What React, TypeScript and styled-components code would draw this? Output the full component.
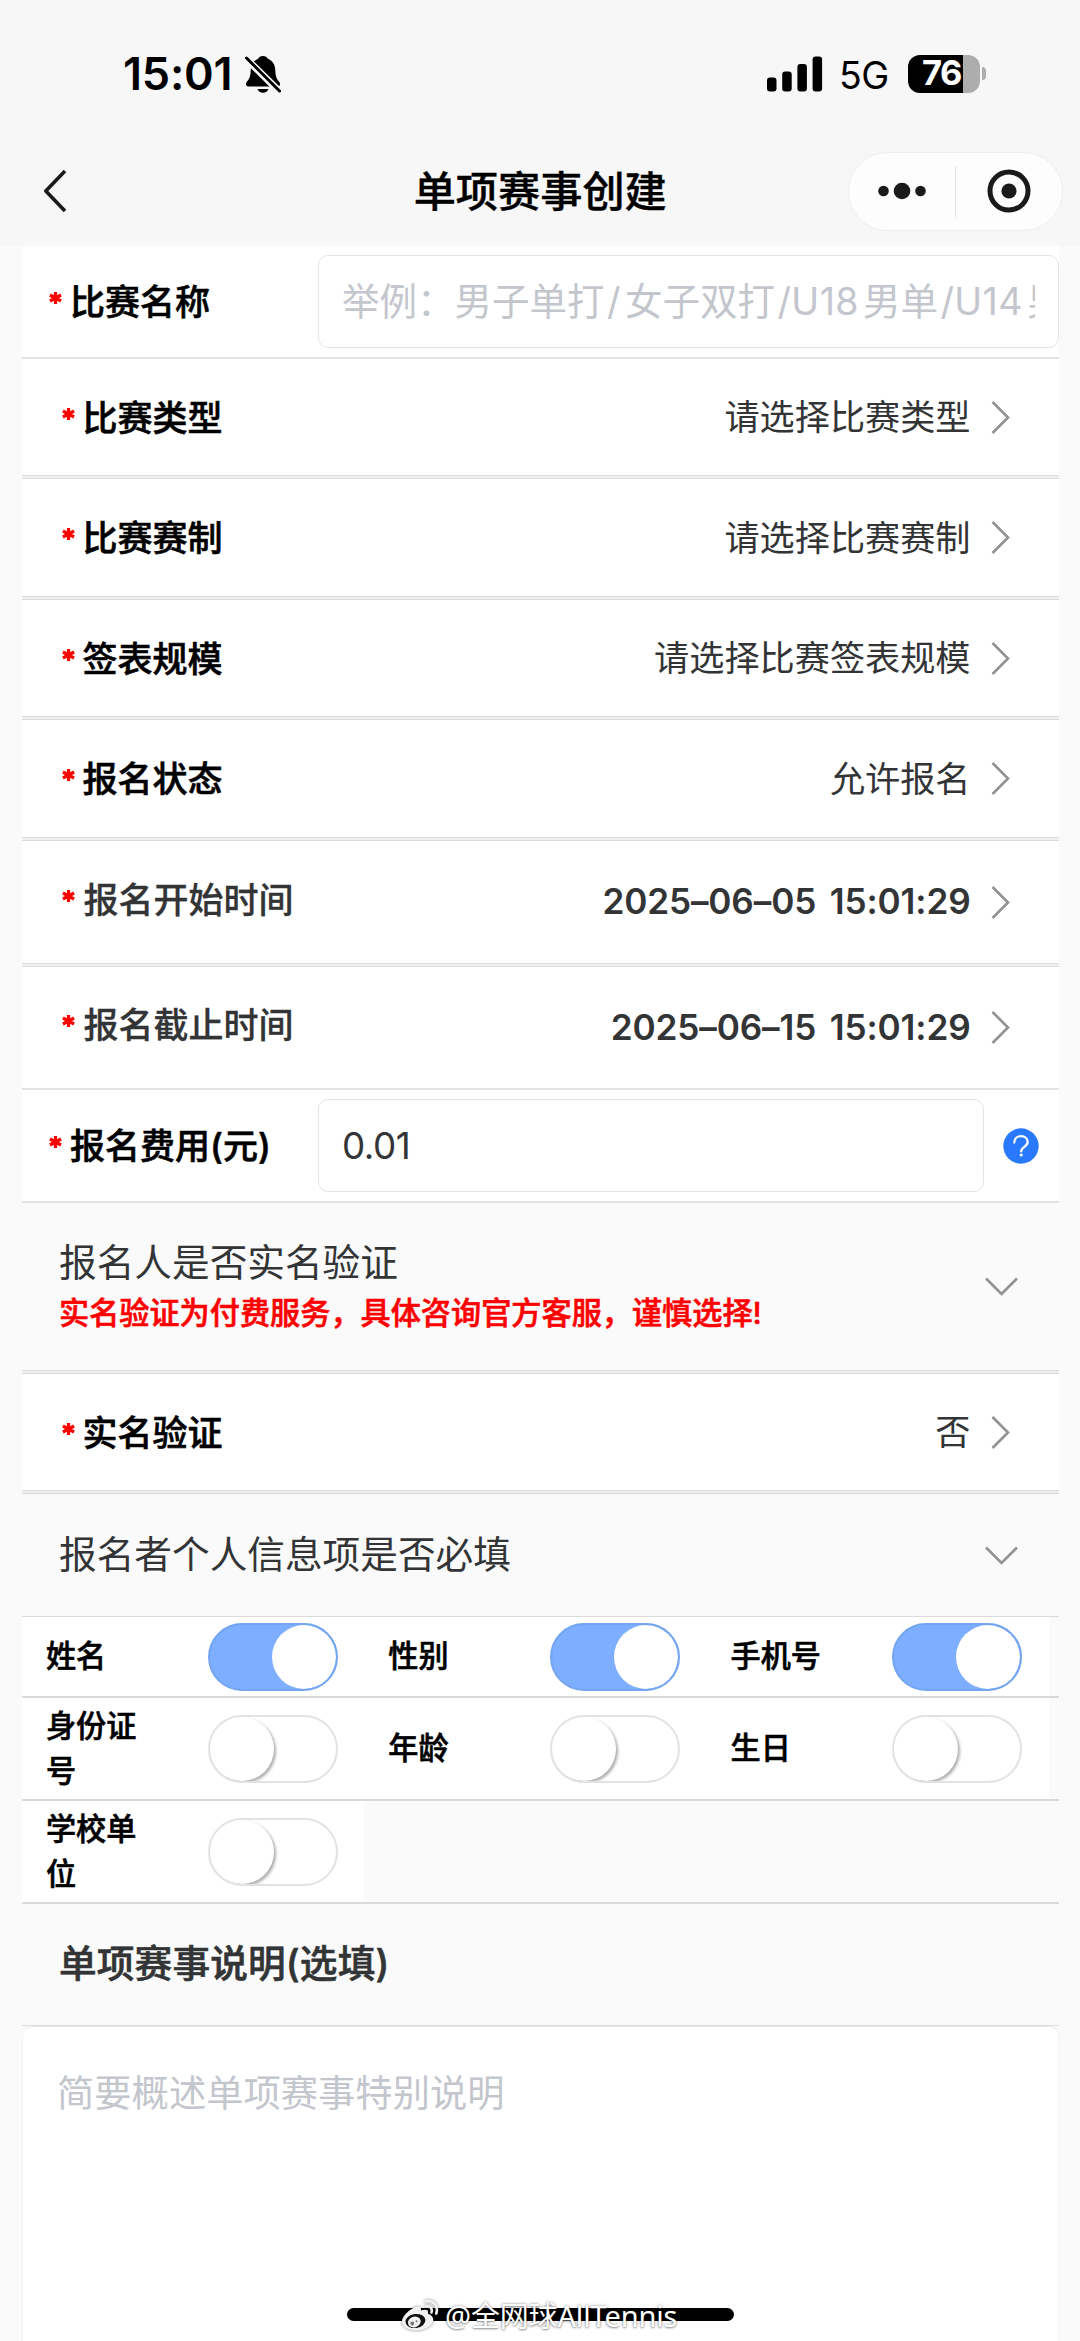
import React from 'react';
import styled, { createGlobalStyle } from 'styled-components';

const Global = createGlobalStyle`
  *, *::before, *::after { box-sizing: border-box; }
  body { margin: 0; background: #fafafa; }
`;

const Screen = styled.div`
  position: relative;
  width: 1080px;
  height: 2341px;
  overflow: hidden;
  display: flex;
  flex-direction: column;
  background: #fafafa;
  color: #333436;
  font-family: Inter, 'Noto Sans CJK SC', sans-serif;
  font-size: 35.16px;
  line-height: 1;
`;

const Header = styled.header`
  height: 246px;
  flex: none;
  background: #f7f7f7;
  color: #000;
  display: flex;
  flex-direction: column;
`;

const StatusBar = styled.div`
  height: 136px;
  padding: 11px 94px 0 123px;
  display: flex;
  align-items: center;
  justify-content: space-between;
`;

const Cluster = styled.div<{ $gap: number }>`
  display: flex;
  align-items: center;
  gap: ${(p) => p.$gap}px;
`;

const Clock = styled.span`
  font-size: 45px;
  font-weight: 600;
  letter-spacing: -0.2px;
  width: 112px;
  white-space: nowrap;
`;

const Network = styled.span`
  font-size: 37.5px;
  font-weight: 400;
  letter-spacing: -0.5px;
  margin: 4px 2px 0 -2px;
  width: 49px;
`;

const Battery = styled.div`
  display: flex;
  align-items: center;
  gap: 2px;
`;

const BatteryBody = styled.div`
  width: 72px;
  height: 38px;
  border-radius: 12px;
  padding-left: 14px;
  display: flex;
  align-items: center;
  background: linear-gradient(90deg, #000 55px, #adadad 55px);
  color: #fff;
  font-size: 34.5px;
  font-weight: 700;
  letter-spacing: -1.5px;
`;

const BatteryNub = styled.div`
  width: 4px;
  height: 13px;
  border-radius: 0 5px 5px 0;
  background: #adadad;
`;

const NavBar = styled.div`
  height: 110px;
  display: grid;
  grid-template-columns: 1fr auto 1fr;
  align-items: center;
  padding: 0 17.5px 0 43px;
`;

const Title = styled.h1`
  margin: 2px 0 0 -25px;
  font-size: 42.2px;
  font-weight: 500;
  -webkit-text-stroke: 0.4px currentColor;
`;

const Capsule = styled.div`
  justify-self: end;
  width: 215px;
  height: 79px;
  border: 1px solid #efefef;
  border-radius: 40px;
  background: #fdfdfd;
  display: flex;
  align-items: center;
`;

const CapsuleHalf = styled.div`
  flex: 1;
  display: flex;
  justify-content: center;
`;

const CapsuleRule = styled.div`
  width: 1px;
  height: 51px;
  background: #e3e3e3;
`;

const Form = styled.main`
  width: 1037px;
  margin-left: 22px;
  flex: 1;
  display: flex;
  flex-direction: column;
`;

const Rule = styled.div<{ $kind: 'thin' | 'single' | 'double' | 'solid' }>`
  flex: none;
  height: ${(p) => ({ thin: 1, single: 2, double: 4, solid: 2 })[p.$kind]}px;
  background: ${(p) =>
    ({
      thin: '#dcdcdc',
      single: '#e2e2e2',
      double: 'linear-gradient(#dedede 1px, #efefef 1px, #efefef 3px, #dcdcdc 3px)',
      solid: '#d9d9d9',
    })[p.$kind]};
`;

const Row = styled.div<{ $h: number; $inset?: boolean }>`
  flex: none;
  height: ${(p) => p.$h}px;
  padding: ${(p) => (p.$inset ? '0 0 0 27px' : '0 49px 0 39.5px')};
  background: #fff;
  display: flex;
  align-items: center;
`;

const Label = styled.div<{ $soft?: boolean; $width?: number }>`
  display: flex;
  align-items: center;
  padding-top: 2px;
  font-weight: 500;
  font-size: 35px;
  -webkit-text-stroke: ${(p) => (p.$soft ? 0.3 : 0.6)}px currentColor;
  color: ${(p) => (p.$soft ? '#333436' : '#000')};
  ${(p) => p.$width && `width: ${p.$width}px; flex: none;`}
  ${(p) => p.$soft && 'padding-bottom: 6px;'}
  white-space: nowrap;
`;

const Star = styled.span<{ $wide?: boolean }>`
  width: ${(p) => (p.$wide ? 22 : 21)}px;
  display: flex;
  align-items: center;
  margin-top: -9px;
`;

const Value = styled.span<{ $strong?: boolean }>`
  margin-left: auto;
  margin-right: 20.5px;
  padding-top: ${(p) => (p.$strong ? 0 : 2)}px;
  font-weight: ${(p) => (p.$strong ? 600 : 400)};
  ${(p) => p.$strong && 'letter-spacing: -0.15px;'}
  word-spacing: 5px;
  white-space: nowrap;
`;

const Field = styled.div<{ $width: number; $muted?: boolean }>`
  width: ${(p) => p.$width}px;
  height: 93px;
  border: 1.5px solid #e4e5e8;
  border-radius: 10px;
  padding: 1px 23px 0 23px;
  display: flex;
  align-items: center;
  font-size: ${(p) => (p.$muted ? 37.5 : 36.8)}px;
  letter-spacing: ${(p) => (p.$muted ? 0 : -0.5)}px;
  color: ${(p) => (p.$muted ? '#c3c6cc' : '#333436')};
`;

const Clip = styled.span`
  flex: 1;
  overflow: hidden;
  white-space: nowrap;
  line-height: 1.4;
`;

const Latin = styled.span`
  margin: 0 4px 0 2.5px;
  letter-spacing: 0.4px;
`;

const Help = styled.span`
  margin-left: 18.5px;
  display: flex;
`;

const Section = styled.div<{ $h: number }>`
  flex: none;
  height: ${(p) => p.$h}px;
  padding: 0 41px 0 37px;
  display: flex;
  align-items: center;
  justify-content: space-between;
  font-size: 37.67px;
`;

const SectionText = styled.div<{ $bold?: boolean }>`
  font-weight: ${(p) => (p.$bold ? 500 : 400)};
  ${(p) => p.$bold && '-webkit-text-stroke: 0.6px currentColor; letter-spacing: 0.15px; margin-top: -2px;'}
  line-height: 50px;
`;

const SectionBody = styled.div`
  padding-top: 2px;
`;

const Warning = styled.div`
  font-size: 30.16px;
  font-weight: 500;
  -webkit-text-stroke: 0.6px currentColor;
  line-height: 50px;
  color: #f00;
`;

const Grid = styled.div<{ $h: number }>`
  flex: none;
  height: ${(p) => p.$h}px;
  display: grid;
  grid-template-columns: repeat(3, 342.3px);
`;

const Cell = styled.div`
  background: #fff;
  padding: 0 26.5px 0 24px;
  display: flex;
  align-items: center;
  justify-content: space-between;
`;

const CellLabel = styled.div`
  width: 96px;
  color: #000;
  font-size: 30.14px;
  font-weight: 500;
  -webkit-text-stroke: 0.6px currentColor;
  line-height: 45px;
`;

const Track = styled.div<{ $on: boolean }>`
  flex: none;
  width: 130px;
  height: 68px;
  border: 2px solid ${(p) => (p.$on ? '#74a5f0' : '#e2e2e2')};
  border-radius: 34px;
  background: ${(p) => (p.$on ? '#7eaeff' : '#fff')};
  display: flex;
  justify-content: ${(p) => (p.$on ? 'flex-end' : 'flex-start')};
  overflow: hidden;
`;

const Knob = styled.div<{ $on: boolean }>`
  width: 64px;
  height: 64px;
  border-radius: 50%;
  background: #fff;
  ${(p) => !p.$on && 'box-shadow: 2px 2px 3px rgba(0, 0, 0, 0.32);'}
`;

const TextArea = styled.div`
  flex: 1;
  border: 1.5px solid #f3f3f4;
  border-top-color: #e6e6e6;
  border-bottom: 0;
  border-radius: 10px 10px 0 0;
  background: #fff;
  padding: 42px 34px;
  font-size: 37.3px;
  line-height: 50px;
  color: #c3c6cc;
`;

const HomeIndicator = styled.div`
  position: absolute;
  left: 347px;
  top: 2308px;
  width: 387px;
  height: 13px;
  border-radius: 7px;
  background: #000;
`;

const Watermark = styled.div`
  position: absolute;
  left: 401px;
  top: 2296px;
  height: 38px;
  display: flex;
  align-items: center;
  gap: 6px;
  color: #fff;
  font-size: 29px;
  font-weight: 400;
  font-family: 'Noto Sans', 'Noto Sans CJK SC', sans-serif;
  letter-spacing: -0.15px;
  white-space: nowrap;
  text-shadow: 0 0 3px rgba(0, 0, 0, 0.45), 0 1px 2px rgba(0, 0, 0, 0.3);
  svg { filter: drop-shadow(0 0 1.5px rgba(0, 0, 0, 0.5)); }
`;

const BellOff = () => (
  <svg width="36" height="38" viewBox="0 0 36 38">
    <path d="M18 1c2.500 0 4.300 1.200 4.800 2.700 4.700 1.800 7.300 5.900 7.500 11.300.2 6.500 1.200 8.700 3.700 11.400 1.800 2 1.200 5-1.400 5H3.400c-2.600 0-3.200-3-1.400-5C4.500 23.700 5.500 21.500 5.700 15c.2-5.400 2.800-9.500 7.500-11.300C13.700 2.200 15.500 1 18 1zM12.500 34h11c-.7 2.300-2.800 3.800-5.500 3.800s-4.800-1.500-5.500-3.800z" />
    <path d="M1 3.500 35 37" stroke="#f7f7f7" strokeWidth="7" />
    <path d="M1.500 3 34.500 36" stroke="#000" strokeWidth="3" strokeLinecap="round" />
  </svg>
);

const Signal = () => (
  <svg width="56" height="36" viewBox="0 0 56 36">
    <rect x="0" y="21.500" width="9.500" height="14" rx="3" />
    <rect x="15.200" y="15.500" width="9.500" height="20" rx="3" />
    <rect x="30.400" y="8" width="9.500" height="27.500" rx="3" />
    <rect x="45.600" y="0.500" width="9.500" height="35" rx="3" />
  </svg>
);

const Back = () => (
  <svg width="25" height="44" viewBox="0 0 25 44" fill="none" stroke="#1a1a1a" strokeWidth="3.600">
    <path d="M22 2 2.800 22 22 42" strokeLinejoin="round" />
  </svg>
);

const Dots = () => (
  <svg width="48" height="18" viewBox="0 0 48 18" fill="#1a1a1a">
    <circle cx="5.500" cy="9" r="5.300" />
    <circle cx="24" cy="9" r="8.300" />
    <circle cx="42.500" cy="9" r="5.300" />
  </svg>
);

const Target = () => (
  <svg width="44" height="44" viewBox="0 0 44 44">
    <circle cx="22" cy="22" r="19" fill="none" stroke="#1a1a1a" strokeWidth="5" />
    <circle cx="22" cy="22" r="7.600" fill="#1a1a1a" />
  </svg>
);

const ChevronRight = () => (
  <svg width="19" height="33" viewBox="0 0 19 33" fill="none" stroke="#909294" strokeWidth="2.600">
    <path d="M1.500 1 17 16.500 1.500 32" />
  </svg>
);

const ChevronDown = () => (
  <svg width="33" height="19" viewBox="0 0 33 19" fill="none" stroke="#909294" strokeWidth="2.600">
    <path d="M1 1.500 16.500 17 32 1.500" />
  </svg>
);

const Asterisk = () => (
  <svg width="13" height="14" viewBox="0 0 14 14" stroke="#f00" strokeWidth="3.500">
    <path d="M7 .5v13M1 3.800l12 6.400M1 10.200l12-6.400" />
  </svg>
);

const Question = () => (
  <svg width="36" height="36" viewBox="0 0 36 36" fill="none">
    <circle cx="18" cy="18" r="17.700" fill="#2979ff" />
    <path d="M11.300 14.500c0-3.700 2.900-6.300 6.700-6.300s6.700 2.500 6.700 5.900c0 4.800-6.500 4.700-6.500 9.300" stroke="#fff" strokeWidth="2.300" strokeLinecap="round" />
    <circle cx="18.200" cy="27" r="1.600" fill="#fff" />
  </svg>
);

const Weibo = () => (
  <svg width="38" height="33" viewBox="0 0 38 33">
    <path d="M14.500 8c3.500-1.600 6.300-.5 5.300 3.600 4.600-1.700 8.500-1.100 7 3.200 9.200 2.800 6.300 12.500-4.500 15.600C11 33.600 1 29.300 1 22.500 1 17.400 7.500 11 14.500 8z" fill="#f2f2f2" />
    <ellipse cx="14.500" cy="22" rx="10" ry="7" transform="rotate(-8 14.500 22)" fill="#111" />
    <ellipse cx="13.300" cy="23" rx="6.500" ry="5.200" transform="rotate(-20 13.300 23)" fill="#f2f2f2" />
    <circle cx="11.300" cy="24.500" r="1.900" fill="#777" />
    <circle cx="15.500" cy="22.300" r="1" fill="#777" />
    <path d="M25 7.300c4-.6 6.700 2.200 5.500 6.200M24.500 2.200c7.600-1.500 13.200 4.400 10.800 12.300" fill="none" stroke="#f2f2f2" strokeWidth="2.600" strokeLinecap="round" />
  </svg>
);

function Required({ text, soft, width }: { text: string; soft?: boolean; width?: number }) {
  return (
    <Label $soft={soft} $width={width}>
      <Star $wide={soft}><Asterisk /></Star>
      {text}
    </Label>
  );
}

function SelectRow({ h, label, value, date }: { h: number; label: string; value: string; date?: boolean }) {
  return (
    <Row $h={h}>
      <Required text={label} soft={date} />
      <Value $strong={date}>{value}</Value>
      <ChevronRight />
    </Row>
  );
}

function Toggle({ label, on }: { label: string; on: boolean }) {
  return (
    <Cell>
      <CellLabel>{label}</CellLabel>
      <Track $on={on}><Knob $on={on} /></Track>
    </Cell>
  );
}

export default function App() {
  return (
    <Screen>
      <Global />
      <Header>
        <StatusBar>
          <Cluster $gap={10}>
            <Clock>15:01</Clock>
            <BellOff />
          </Cluster>
          <Cluster $gap={18}>
            <Signal />
            <Network>5G</Network>
            <Battery>
              <BatteryBody>76</BatteryBody>
              <BatteryNub />
            </Battery>
          </Cluster>
        </StatusBar>
        <NavBar>
          <Back />
          <Title>单项赛事创建</Title>
          <Capsule>
            <CapsuleHalf><Dots /></CapsuleHalf>
            <CapsuleRule />
            <CapsuleHalf><Target /></CapsuleHalf>
          </Capsule>
        </NavBar>
      </Header>
      <Form>
        <Row $h={111} $inset>
          <Required text="比赛名称" width={269} />
          <Field $width={741} $muted>
            <Clip>
              举例：男子单打<Latin>/</Latin>女子双打<Latin>/U18</Latin>男单<Latin>/U14</Latin>男单
            </Clip>
          </Field>
        </Row>
        <Rule $kind="single" />
        <SelectRow h={116} label="比赛类型" value="请选择比赛类型" />
        <Rule $kind="double" />
        <SelectRow h={117} label="比赛赛制" value="请选择比赛赛制" />
        <Rule $kind="double" />
        <SelectRow h={116} label="签表规模" value="请选择比赛签表规模" />
        <Rule $kind="double" />
        <SelectRow h={117} label="报名状态" value="允许报名" />
        <Rule $kind="double" />
        <SelectRow h={122} label="报名开始时间" value="2025–06–05 15:01:29" date />
        <Rule $kind="double" />
        <SelectRow h={121} label="报名截止时间" value="2025–06–15 15:01:29" date />
        <Rule $kind="single" />
        <Row $h={111} $inset>
          <Required text="报名费用(元)" width={269} />
          <Field $width={666}>
            <Clip>0.01</Clip>
          </Field>
          <Help><Question /></Help>
        </Row>
        <Rule $kind="single" />
        <Section $h={167}>
          <SectionBody>
            <SectionText>报名人是否实名验证</SectionText>
            <Warning>实名验证为付费服务，具体咨询官方客服，谨慎选择!</Warning>
          </SectionBody>
          <ChevronDown />
        </Section>
        <Rule $kind="double" />
        <SelectRow h={116} label="实名验证" value="否" />
        <Rule $kind="double" />
        <Section $h={122}>
          <SectionText>报名者个人信息项是否必填</SectionText>
          <ChevronDown />
        </Section>
        <Rule $kind="thin" />
        <Grid $h={79}>
          <Toggle label="姓名" on />
          <Toggle label="性别" on />
          <Toggle label="手机号" on />
        </Grid>
        <Rule $kind="solid" />
        <Grid $h={101}>
          <Toggle label="身份证号" on={false} />
          <Toggle label="年龄" on={false} />
          <Toggle label="生日" on={false} />
        </Grid>
        <Rule $kind="solid" />
        <Grid $h={101}>
          <Toggle label="学校单位" on={false} />
        </Grid>
        <Rule $kind="solid" />
        <Section $h={121}>
          <SectionText $bold>单项赛事说明(选填)</SectionText>
        </Section>
        <Rule $kind="thin" />
        <TextArea>简要概述单项赛事特别说明</TextArea>
      </Form>
      <HomeIndicator />
      <Watermark>
        <Weibo />
        @全网球AllTennis
      </Watermark>
    </Screen>
  );
}
